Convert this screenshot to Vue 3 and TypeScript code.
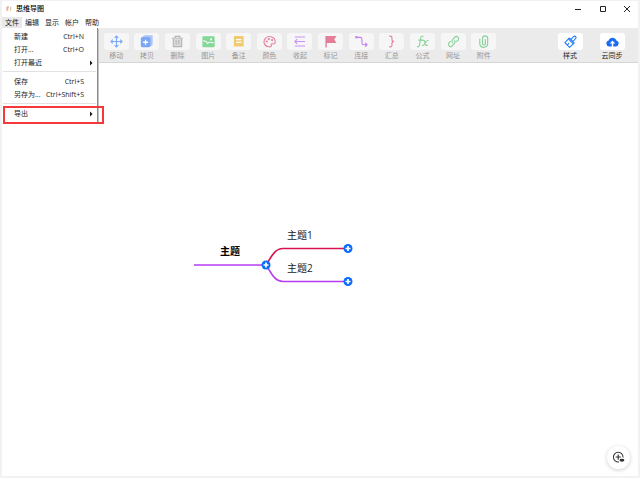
<script setup lang="ts">
import { ref } from 'vue'

interface Tool { id: string; label: string; color: string }
interface MenuItem { label: string; shortcut?: string; submenu?: boolean; marked?: boolean }

const menus: string[] = ['文件', '编辑', '显示', '帐户', '帮助']
const activeMenu = ref<string>('文件')

const menuGroups: MenuItem[][] = [
  [
    { label: '新建', shortcut: 'Ctrl+N' },
    { label: '打开...', shortcut: 'Ctrl+O' },
    { label: '打开最近', submenu: true },
  ],
  [
    { label: '保存', shortcut: 'Ctrl+S' },
    { label: '另存为...', shortcut: 'Ctrl+Shift+S' },
  ],
  [{ label: '导出', submenu: true, marked: true }],
]

const tools: Tool[] = [
  { id: 'move', label: '移动', color: '#7ca8f8' },
  { id: 'copy', label: '拷贝', color: '#7ba5f5' },
  { id: 'delete', label: '删除', color: '#b4b4b4' },
  { id: 'image', label: '图片', color: '#86d898' },
  { id: 'note', label: '备注', color: '#f0cb74' },
  { id: 'color', label: '颜色', color: '#e5839d' },
  { id: 'collapse', label: '收起', color: '#cb90f3' },
  { id: 'flag', label: '标记', color: '#e37e99' },
  { id: 'link', label: '连接', color: '#c480f0' },
  { id: 'summary', label: '汇总', color: '#e5839d' },
  { id: 'formula', label: '公式', color: '#86d299' },
  { id: 'url', label: '网址', color: '#86d299' },
  { id: 'attach', label: '附件', color: '#86d299' },
]

const joints: [number, number][] = [[74, 37], [156, 20.5], [156, 53.5]]
</script>

<template>
  <div class="window">
    <header class="titlebar">
      <svg class="logo" viewBox="0 0 6 6" aria-hidden="true">
        <path d="M1 1v4M1 1h2M1 3h1.5" stroke="#f08a78" />
        <path d="M4.700 1v2" stroke="#8fc9d8" />
        <path d="M4.700 3v2" stroke="#f6c75e" />
      </svg>
      <h1>思维导图</h1>
      <div class="controls">
        <button type="button" aria-label="最小化"><svg viewBox="0 0 8 8"><path d="M1 4.5h6" /></svg></button>
        <button type="button" aria-label="最大化"><svg viewBox="0 0 8 8"><path d="M1.5 1.5h5v5h-5z" /></svg></button>
        <button type="button" aria-label="关闭"><svg viewBox="0 0 8 8"><path d="M1 1l6 6M7 1L1 7" /></svg></button>
      </div>
    </header>

    <nav class="menubar">
      <button
        v-for="m in menus" :key="m" type="button"
        :class="{ open: m === activeMenu }" @click="activeMenu = m"
      >{{ m }}</button>
      <div v-if="activeMenu === '文件'" class="dropdown">
        <div v-for="(group, g) in menuGroups" :key="g" class="group">
          <button
            v-for="item in group" :key="item.label" type="button"
            class="item" :class="{ marked: item.marked }"
          >
            <span>{{ item.label }}</span>
            <span v-if="item.shortcut" class="shortcut">{{ item.shortcut }}</span>
            <svg v-if="item.submenu" class="arrow" viewBox="0 0 4 6"><path d="M1 0.5L3.5 3L1 5.5z" /></svg>
          </button>
        </div>
      </div>
    </nav>

    <div class="toolbar">
      <div class="tools">
        <button v-for="t in tools" :key="t.id" type="button" class="tool faded">
          <span class="tile">
            <svg viewBox="0 0 14 14" :stroke="t.color" :fill="t.color" stroke-width="1.2">
              <g v-if="t.id === 'move'" fill="none">
                <path d="M7 1.5v11M1.5 7h11M5 3l2-2 2 2M5 11l2 2 2-2M3 5L1 7l2 2M11 5l2 2-2 2" />
              </g>
              <g v-else-if="t.id === 'copy'">
                <path d="M3.5 2L5 1h8v9l-2 2z" opacity=".6" />
                <rect x="1.5" y="3" width="9" height="9.5" rx="1" />
                <path d="M6 5v5.5M3.2 7.800h5.600" stroke="#fff" stroke-width="1.4" />
              </g>
              <g v-else-if="t.id === 'delete'" fill="none">
                <path d="M1 3.5h12M4.500 3V1.500h5V3" />
                <path d="M2.500 4v8.500h9V4" fill="#dcdcdc" />
                <path d="M5.500 5.500v5M8.500 5.500v5" />
              </g>
              <g v-else-if="t.id === 'image'">
                <rect x="1" y="2" width="12" height="10.5" rx=".5" />
                <path d="M1 6.500q3-1 5 2.500q1.500-2 6.500-.5" fill="none" stroke="#f6f6f6" />
                <circle cx="9.800" cy="4.800" r="1.200" fill="#f6f6f6" stroke="none" />
              </g>
              <g v-else-if="t.id === 'note'" stroke="none">
                <path d="M2 1h10.500v12L10.500 11.800L8.800 13L7.200 11.800L5.500 13L3.800 11.800L2 13z" />
                <path d="M4.500 5h5.500M4.500 8h5.500" stroke="#fff" />
              </g>
              <g v-else-if="t.id === 'color'" fill="none">
                <path d="M3 3.2C6 .2 13.200 2 13.200 7.200c0 2-1 3-2.800 2.300C8.500 9 8.500 10 9 11c.5 1.500-1 2-3 1.600C1 12 -.5 6.500 3 3.200z" />
                <circle cx="4" cy="7" r=".6" /><circle cx="6.300" cy="4.500" r=".6" /><circle cx="9.800" cy="5.500" r=".6" />
              </g>
              <g v-else-if="t.id === 'collapse'" fill="none">
                <path d="M2 2.200h11M2 7h11M2 11.800h11M4.500 4.500L2 7l2.500 2.500" />
              </g>
              <g v-else-if="t.id === 'flag'" stroke="none">
                <path d="M1.500 1h12L11 4.800l2.500 3.900H3V13.500H1.500z" />
              </g>
              <g v-else-if="t.id === 'link'" fill="none">
                <path d="M2 2.500h3.500q2 0 2 2v4q0 2 2 2H13M11 8.500l2 2l-2 2" />
                <circle cx="1.500" cy="2.500" r=".8" />
              </g>
              <g v-else-if="t.id === 'summary'" fill="none">
                <path d="M4.500 1.200h1.300q1.700 0 1.700 1.700v2.300Q7.500 7 9.800 7q-2.300 0-2.300 1.800v2.300q0 1.700-1.700 1.700H4.500" />
              </g>
              <g v-else-if="t.id === 'formula'" fill="none">
                <path d="M8 1.500Q5.600.5 5 3.500L3.700 11Q3 13.500 1 12.500M2.500 5.500h5M7.500 6q1.500-.8 2 1.500l.8 2.500q.6 2 2.400 1M13.500 6q-1.700-.5-2.700 1.200L9 10q-1 1.800-2.400 1" />
              </g>
              <g v-else-if="t.id === 'url'" fill="none">
                <path d="M6 8.500Q4.500 6.500 6 5l2.500-2.800q1.500-1.300 3.200 0q1.500 1.600.2 3.300L10 7.500M8 5.500Q9.500 7.500 8 9l-2.500 2.800q-1.500 1.300-3.200 0q-1.500-1.600-.2-3.300L4 6.500" />
              </g>
              <g v-else fill="none">
                <path d="M9 4.500V9.500q-.2 1.200-1.500 1.200T6 9.500V3.500Q6.200 1 8.800 1t2.700 2.500V9.500q-.3 3.800-4.200 3.800T3 9.500V4" />
              </g>
            </svg>
          </span>
          <span>{{ t.label }}</span>
        </button>
      </div>
      <div class="actions">
        <button type="button" class="tool">
          <span class="tile">
            <svg viewBox="0 0 14 14" fill="none" stroke="#1677ff" stroke-width="1.1">
              <path d="M5.800 3.200l5.400 5.600M4.800 4.200L1 8.300l5 5L10 9.500M5.800 3.200L4.800 4.200M11.200 8.800L10 9.800M4.800 4.200L10 9.600M7.500 4.800l3-3.200q1-.8 2 .1t.1 2L9.500 7M3.500 10.800l2-2" />
            </svg>
          </span>
          <span>样式</span>
        </button>
        <button type="button" class="tool">
          <span class="tile">
            <svg viewBox="0 0 14 14">
              <path d="M3.500 12.500a3.300 3.300 0 0 1-.6-6.500a4.300 4.300 0 0 1 8.200 0a3.300 3.300 0 0 1-.6 6.500z" fill="#176df5" />
              <path d="M7 13V8" fill="none" stroke="#fff" stroke-width="1.600" />
              <path d="M7 5.800L10 9.200H4z" fill="#fff" />
            </svg>
          </span>
          <span>云同步</span>
        </button>
      </div>
    </div>

    <main class="canvas">
      <svg class="map" viewBox="0 0 164 64" role="img" aria-label="思维导图">
        <g fill="none" stroke-width="1.7">
          <path d="M2 37H74" stroke="#b63cf0" />
          <path d="M74 37C79 30 82 20.500 91 20.500H156" stroke="#d9104f" />
          <path d="M74 37C79 44 82 53.500 91 53.500H156" stroke="#b63cf0" />
        </g>
        <text class="root" x="38" y="27" text-anchor="middle">主题</text>
        <text class="leaf" x="95" y="11">主题1</text>
        <text class="leaf" x="95" y="44">主题2</text>
        <g v-for="(p, i) in joints" :key="i" :transform="`translate(${p[0]} ${p[1]})`">
          <circle r="4.500" fill="#0a6cff" />
          <path d="M-2.500 0h5M0-2.500v5" stroke="#fff" stroke-width="1.700" />
        </g>
      </svg>
      <button type="button" class="locate" aria-label="定位">
        <svg viewBox="0 0 14 14" fill="none" stroke="#333">
          <path d="M7.500 11.700A5.200 5.200 0 1 1 11.900 7" stroke-width="1.100" />
          <path d="M4 6.500h5.500M6.700 3.800v5.500" stroke-width="1.200" />
          <ellipse cx="10.700" cy="10" rx="2.600" ry="1.600" fill="#333" stroke="none" />
        </svg>
      </button>
    </main>
  </div>
</template>

<style>
html, body, #app { height: 100%; }
body { margin: 0; background: #f2f2f2; }
</style>

<style scoped>
* { box-sizing: border-box; }
.window {
  display: flex;
  flex-direction: column;
  height: 100%;
  border: 2px solid #f2f2f2;
  border-top-width: 1px;
  background: #fff;
  color: #222;
  font: 7px/10px "Open Sans", "Noto Sans CJK SC", sans-serif;
}
button {
  margin: 0;
  padding: 0;
  border: 0;
  background: none;
  color: inherit;
  font: inherit;
}
svg { display: block; }
.titlebar { display: flex; align-items: center; height: 16px; padding-left: 4px; }
.logo { width: 6px; height: 6px; margin-right: 4px; fill: none; }
h1 { margin: 0; font-size: 7px; font-weight: 500; color: #000; }
.controls { display: flex; margin-left: auto; }
.controls button { display: grid; place-items: center; width: 25px; height: 14px; }
.controls button:last-child { width: 23px; }
.controls svg { width: 8px; height: 8px; fill: none; stroke: #222; }
.menubar { position: relative; display: flex; height: 11px; }
.menubar > button { padding: 0 3px; }
.menubar > .open { background: #e9e9e9; }
.dropdown {
  position: absolute;
  z-index: 2;
  top: 11px;
  left: 0;
  width: 95px;
  padding: 2px 0 3px;
  background: #fff;
  box-shadow: 1px 0 0 #8a8a8a, 2px 1px 0 #c4c4c4;
}
.group + .group::before {
  content: "";
  display: block;
  height: 1px;
  margin: 2px 1px 3px;
  background: #e2e2e2;
}
.item {
  position: relative;
  display: flex;
  align-items: center;
  width: 100%;
  height: 13px;
  padding: 0 13px 0 12px;
  white-space: nowrap;
}
.shortcut { margin-left: auto; }
.arrow { position: absolute; right: 4px; width: 4px; height: 6px; fill: #111; }
.marked::after {
  content: "";
  position: absolute;
  inset: -1px -7px -4px 1px;
  border: 2px solid #f5393b;
}
.toolbar {
  display: flex;
  height: 35px;
  padding: 5px 5px 0 99px;
  border-bottom: 1px solid #d6d6d6;
  background: #ebebeb;
}
.tools { display: grid; flex: 0 1 398px; grid-template-columns: repeat(13, 1fr); }
.actions { display: flex; margin-left: auto; }
.tool { display: flex; flex-direction: column; align-items: center; gap: 1px; height: 28px; }
.actions .tool { width: 42px; }
.tile {
  display: grid;
  place-items: center;
  width: 25px;
  height: 17px;
  border-radius: 3px;
  background: #fff;
}
.tile svg { width: 13px; height: 13px; }
.faded { color: #969696; }
.faded .tile { background: #f6f6f6; }
.canvas { position: relative; flex: 1; overflow: hidden; }
.map { position: absolute; left: 190px; top: 165px; width: 164px; height: 64px; }
.root { font-size: 10px; font-weight: 700; fill: #000; }
.leaf { font-size: 10px; fill: #222; }
.locate {
  position: absolute;
  right: 8px;
  bottom: 7px;
  display: grid;
  place-items: center;
  width: 23px;
  height: 23px;
  border-radius: 50%;
  background: #fff;
  box-shadow: 0 1px 4px #d0d0d0;
}
.locate svg { width: 13px; height: 13px; }
</style>
